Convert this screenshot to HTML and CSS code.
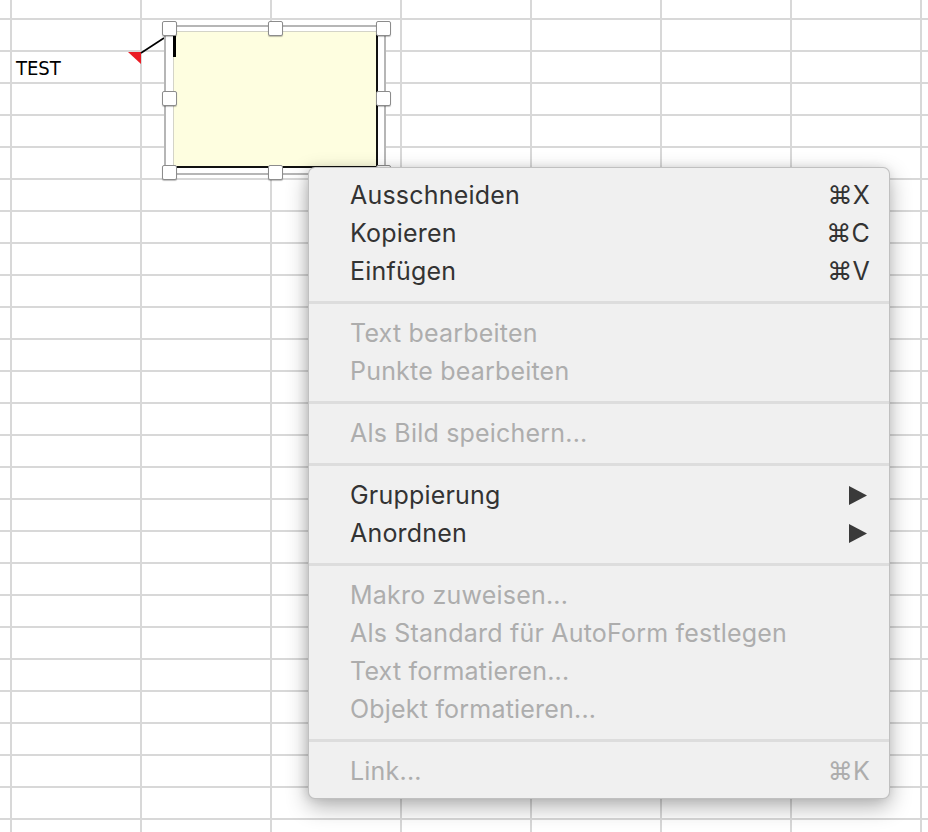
FILE: index.html
```html
<!DOCTYPE html>
<html lang="de">
<head>
<meta charset="utf-8">
<title>Kontextmenü</title>
<link rel="stylesheet" href="styles.css">
</head>
<body>
<div class="sheet">
  <div class="cell-text">TEST</div>

  <svg class="connector" width="60" height="40" viewBox="120 30 60 40">
    <polygon points="128,52 141,52 141,64" fill="#ea1c24"/>
    <line x1="141" y1="53" x2="164" y2="38" stroke="#000" stroke-width="1.6"/>
  </svg>

  <div class="frame">
    <div class="note"></div>
    <div class="caret"></div>
  </div>
  <div class="handle h-tl"></div>
  <div class="handle h-tm"></div>
  <div class="handle h-tr"></div>
  <div class="handle h-ml"></div>
  <div class="handle h-mr"></div>
  <div class="handle h-bl"></div>
  <div class="handle h-bm"></div>
  <div class="handle h-br"></div>

  <div class="menu">
    <div class="item"><span>Ausschneiden</span><span class="key">⌘X</span></div>
    <div class="item"><span>Kopieren</span><span class="key">⌘C</span></div>
    <div class="item"><span>Einfügen</span><span class="key">⌘V</span></div>
    <div class="sep"></div>
    <div class="item disabled"><span>Text bearbeiten</span></div>
    <div class="item disabled"><span>Punkte bearbeiten</span></div>
    <div class="sep"></div>
    <div class="item disabled"><span>Als Bild speichern...</span></div>
    <div class="sep"></div>
    <div class="item"><span>Gruppierung</span><svg class="arrow" width="18" height="19" viewBox="0 0 18 19"><polygon points="0,0 18,9.5 0,19" fill="#3a3a3a"/></svg></div>
    <div class="item"><span>Anordnen</span><svg class="arrow" width="18" height="19" viewBox="0 0 18 19"><polygon points="0,0 18,9.5 0,19" fill="#3a3a3a"/></svg></div>
    <div class="sep"></div>
    <div class="item disabled"><span>Makro zuweisen...</span></div>
    <div class="item disabled"><span>Als Standard für AutoForm festlegen</span></div>
    <div class="item disabled"><span>Text formatieren...</span></div>
    <div class="item disabled"><span>Objekt formatieren...</span></div>
    <div class="sep"></div>
    <div class="item disabled"><span>Link...</span><span class="key">⌘K</span></div>
  </div>
</div>
</body>
</html>
```

FILE: styles.css
```css
html, body {
  margin: 0;
  padding: 0;
}

body {
  width: 928px;
  height: 832px;
  overflow: hidden;
  background: #fff;
}

.sheet {
  position: relative;
  width: 928px;
  height: 832px;
  box-sizing: border-box;
  padding: 51px 0 0 16px;
  background-color: #fff;
  background-image:
    linear-gradient(to right, #d8d8d8 2px, transparent 2px),
    linear-gradient(to bottom, #d8d8d8 2px, transparent 2px);
  background-size: 130px 32px, 130px 32px;
  background-position: 10px 18px, 10px 18px;
}

.cell-text {
  font-family: "DejaVu Sans Condensed", "DejaVu Sans", sans-serif;
  font-stretch: condensed;
  font-size: 20px;
  line-height: 34px;
  color: #000;
}

.connector {
  position: absolute;
  left: 120px;
  top: 30px;
}

.frame {
  position: absolute;
  left: 164px;
  top: 25px;
  width: 218px;
  height: 146px;
  border: 2px solid #b6b6b6;
  background: #fff;
}

.note {
  position: absolute;
  left: 7px;
  top: 4px;
  width: 205px;
  height: 137px;
  background: #fefee0;
  border-top: 1px solid #d4d4c8;
  border-left: 1px solid #d4d4c8;
  border-right: 2px solid #111;
  border-bottom: 2px solid #111;
  box-sizing: border-box;
}

.caret {
  position: absolute;
  left: 7px;
  top: 5px;
  width: 3px;
  height: 25px;
  background: #000;
}

.handle {
  position: absolute;
  width: 13px;
  height: 13px;
  background: #fff;
  border: 1px solid #8c8c8c;
  border-radius: 2px;
  box-shadow: 0 1px 1px rgba(0,0,0,0.25);
}
.h-tl { left: 162px; top: 21px; }
.h-tm { left: 268px; top: 21px; }
.h-tr { left: 376px; top: 21px; }
.h-ml { left: 162px; top: 91px; }
.h-mr { left: 376px; top: 91px; }
.h-bl { left: 162px; top: 165px; }
.h-bm { left: 268px; top: 165px; }
.h-br { left: 376px; top: 165px; }

.menu {
  position: absolute;
  left: 308px;
  top: 167px;
  width: 582px;
  box-sizing: border-box;
  padding: 8px 0;
  background: #f0f0f0;
  border: 1px solid rgba(0,0,0,0.2);
  border-radius: 7px;
  box-shadow: 0 8px 22px rgba(0,0,0,0.3), -2px 0 10px rgba(0,0,0,0.1);
  font-family: Inter, "Noto Sans", "DejaVu Sans", sans-serif;
  font-size: 25px;
  letter-spacing: 0.2px;
  color: #333333;
}

.item {
  display: flex;
  justify-content: space-between;
  align-items: center;
  height: 38px;
  line-height: 38px;
  padding: 0 19px 0 41px;
}

.item.disabled {
  color: #adadad;
}

.key {
  font-family: Inter, "DejaVu Sans", sans-serif;
}

.arrow {
  display: block;
  margin-right: 3px;
}

.sep {
  height: 3px;
  margin: 11px 0 10px;
  background: #dddddd;
}
```
